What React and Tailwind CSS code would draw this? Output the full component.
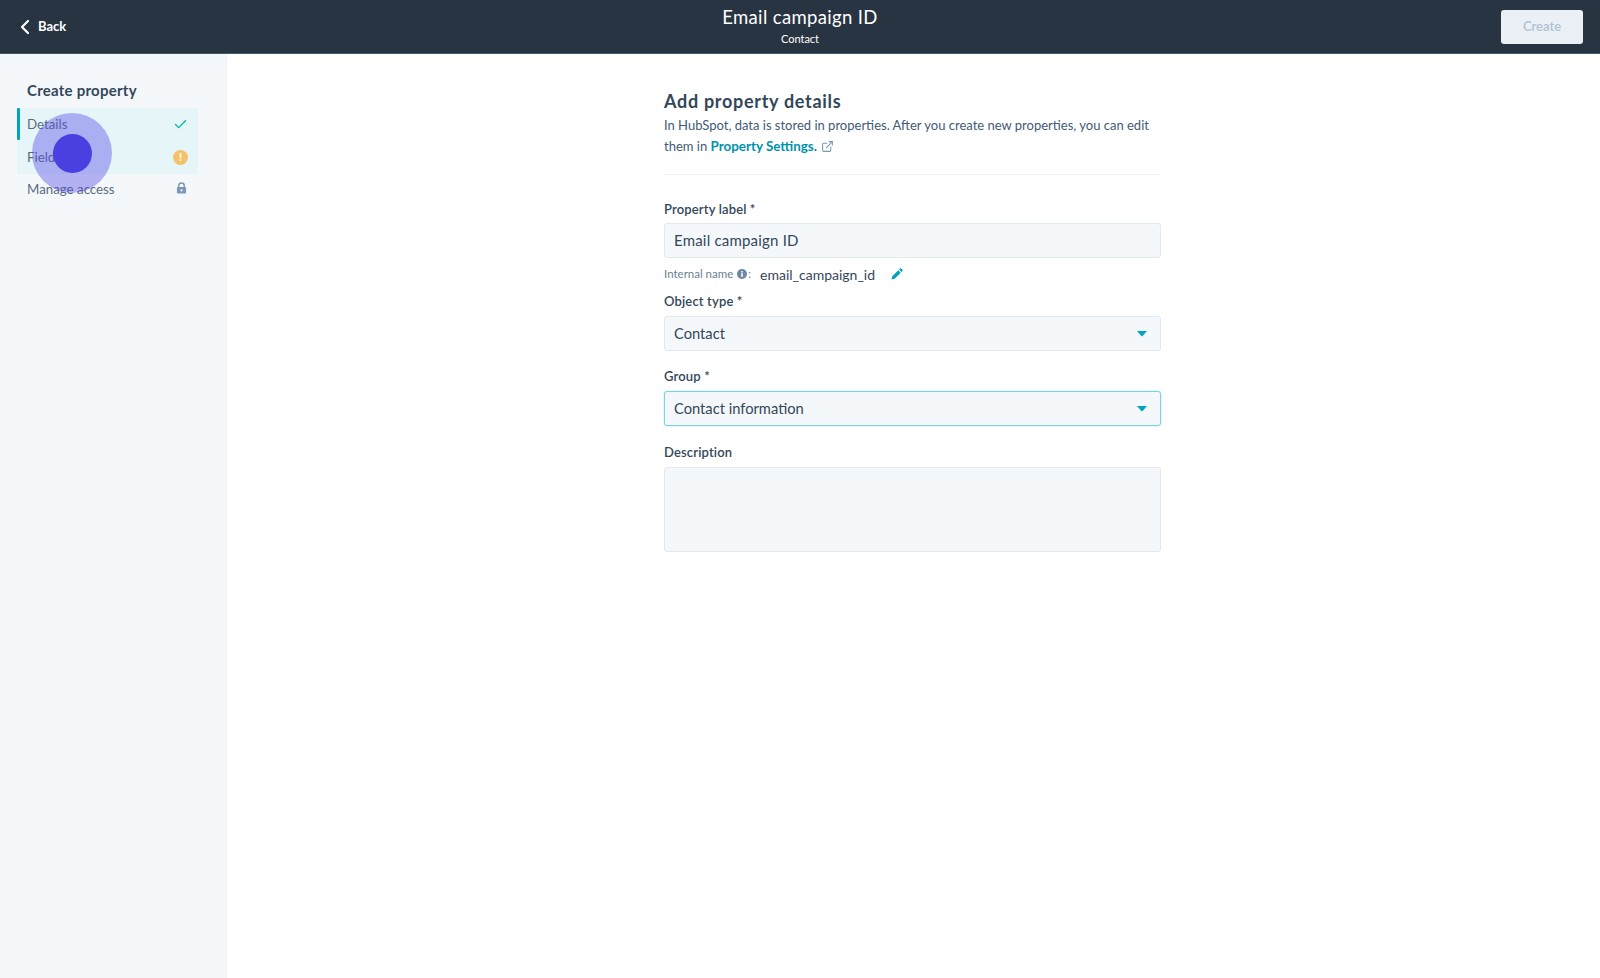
import { ChevronLeft, Check, ExternalLink } from "lucide-react";

const STEPS = [
    { label: "Details", status: "done" },
    { label: "Field", status: "warning" },
    { label: "Manage access", status: "locked" },
];

function Caret() {
    return (
        <svg width="12" height="7" viewBox="0 0 12 7" className="text-[#00a4bd]">
            <path d="M1 1h10L6.6 6a.8.8 0 0 1-1.2 0z" fill="currentColor" />
        </svg>
    );
}

function LockIcon() {
    return (
        <svg width="11" height="12" viewBox="0 0 12 13" className="text-[#7c98b6] -mt-[3px] mr-[1px]">
            <path d="M3 6V4a3 3 0 0 1 6 0v2" fill="none" stroke="currentColor" strokeWidth="1.6" />
            <rect x="1" y="5.5" width="10" height="7" rx="1.2" fill="currentColor" />
            <circle cx="6" cy="9" r="1.2" fill="#f5f8fa" />
        </svg>
    );
}

function InfoIcon() {
    return (
        <svg width="10" height="10" viewBox="0 0 10 10" className="ml-[4px] text-[#6b87a3]">
            <circle cx="5" cy="5" r="5" fill="currentColor" />
            <rect x="4.2" y="4.2" width="1.6" height="3.6" fill="#fff" />
            <rect x="4.2" y="2.1" width="1.6" height="1.4" fill="#fff" />
        </svg>
    );
}

function PencilIcon() {
    return (
        <svg width="12" height="12" viewBox="0 0 12 12" className="ml-[16px] text-[#00a4bd]">
            <path d="M0.5 11.5l.8-3.2 6-6 2.4 2.4-6 6zM8.1 1.5l1-1a.8.8 0 0 1 1.1 0l1.3 1.3a.8.8 0 0 1 0 1.1l-1 1z" fill="currentColor" />
        </svg>
    );
}

function FieldLabel({ children }) {
    return <label className="block text-[13px] leading-[18px] font-semibold tracking-[0.15px] text-[#33475b]">{children}</label>;
}

function SelectBox({ value, focused }) {
    return (
        <div
            className={`mt-[6px] h-[35px] flex items-center justify-between pl-[9px] pr-[12px] rounded-[3px] bg-[#f5f8fa] border text-[14.7px] text-[#33475b] ${focused ? "border-[#7fd1de] shadow-[0_0_2px_#a9e4ec]" : "border-[#e3e8ee]"}`}
        >
            <span className="-mt-[1px]">{value}</span>
            <Caret />
        </div>
    );
}

export default function App() {
    return (
        <div className="h-[978px] flex flex-col bg-white font-['Lato','Noto_Sans',sans-serif] text-[#33475b]">
            {/* Header */}
            <header className="h-[54px] shrink-0 bg-[#283442] flex items-center justify-between pl-[14px] pr-[17px] relative border-b border-[#3f5a66]">
                <div className="flex items-center gap-[1px] text-white text-[13px] font-bold">
                    <ChevronLeft size={24} strokeWidth={2.2} className="-ml-[1px]" />
                    Back
                </div>
                <div className="absolute left-0 right-0 top-[5px] text-center text-white pointer-events-none">
                    <div className="text-[18.5px] leading-[24px] tracking-[0.35px]">Email campaign ID</div>
                    <div className="text-[11px] leading-[14px] mt-[3px]">Contact</div>
                </div>
                <button className="w-[82px] h-[34px] rounded-[3px] bg-[#eaf0f6] text-[#b0c1d4] text-[13px] font-semibold">
                    Create
                </button>
            </header>

            <div className="flex flex-1">
                {/* Sidebar */}
                <aside className="w-[227px] shrink-0 bg-[#f5f8fa] border-r border-[#eef2f6] pl-[17px] pt-[26px] relative">
                    <h2 className="pl-[10px] text-[15px] leading-[20px] font-bold text-[#33475b] tracking-[0.25px]">Create property</h2>
                    <div className="relative mt-[8px] w-[181px]">
                        <div className="absolute left-0 top-0 w-[3px] h-[32px] bg-[#00a4bd] rounded-[1px]" />
                        {STEPS.map((step) => (
                            <div
                                key={step.label}
                                className={`pl-[10px] pr-[10px] flex items-center justify-between text-[13.3px] text-[#5a6b7d] ${step.status === "locked" ? "h-[31px]" : "h-[33px] bg-[#e5f5f8]"}`}
                            >
                                <span>{step.label}</span>
                                {step.status === "done" && <Check size={15} strokeWidth={2.2} className="text-[#00bda5]" />}
                                {step.status === "warning" && (
                                    <span className="w-[15px] h-[15px] rounded-full bg-[#f5c26b] text-white text-[11px] font-bold flex items-center justify-center">!</span>
                                )}
                                {step.status === "locked" && <LockIcon />}
                            </div>
                        ))}
                    </div>
                    {/* Click marker */}
                    <div className="absolute left-[32px] top-[59px] w-[80px] h-[80px] rounded-full bg-[#4f46e5]/40 flex items-center justify-center">
                        <div className="w-[39px] h-[39px] rounded-full bg-[#4a3fe0]" />
                    </div>
                </aside>

                {/* Form */}
                <main className="flex-1 pl-[437px] pt-[35px]">
                    <div className="w-[497px]">
                        <h1 className="text-[18px] leading-[24px] font-bold tracking-[0.7px]">Add property details</h1>
                        <p className="mt-[2px] text-[13px] leading-[21px] text-[#425b76]">
                            In HubSpot, data is stored in properties. After you create new properties, you can edit
                            <br />
                            them in <span className="font-bold text-[13.4px] text-[#0091ae]">Property Settings.</span>{" "}
                            <ExternalLink size={13} className="inline ml-[1px] -mt-[2px] text-[#7c98b6]" />
                        </p>
                        <div className="mt-[17px] border-t border-[#eef1f5]" />

                        <div className="mt-[25px]">
                            <FieldLabel>Property label *</FieldLabel>
                            <div className="mt-[5px] h-[35px] flex items-center pl-[9px] rounded-[3px] bg-[#f5f8fa] border border-[#e3e8ee] text-[15px] tracking-[0.2px]">
                                Email campaign ID
                            </div>
                        </div>

                        <div className="mt-[7px] h-[18px] flex items-center text-[#6b7f92]">
                            <span className="text-[11.5px]">Internal name</span>
                            <InfoIcon />
                            <span className="text-[11px] ml-[1px]">:</span>
                            <span className="ml-[9px] text-[14px] text-[#33475b]">email_campaign_id</span>
                            <PencilIcon />
                        </div>

                        <div className="mt-[9px]">
                            <FieldLabel>Object type *</FieldLabel>
                            <SelectBox value="Contact" />
                        </div>
                        <div className="mt-[16px]">
                            <FieldLabel>Group *</FieldLabel>
                            <SelectBox value="Contact information" focused />
                        </div>
                        <div className="mt-[17px]">
                            <FieldLabel>Description</FieldLabel>
                            <div className="mt-[6px] h-[85px] rounded-[3px] bg-[#f5f8fa] border border-[#e3e8ee]" />
                        </div>
                    </div>
                </main>
            </div>
        </div>
    );
}
